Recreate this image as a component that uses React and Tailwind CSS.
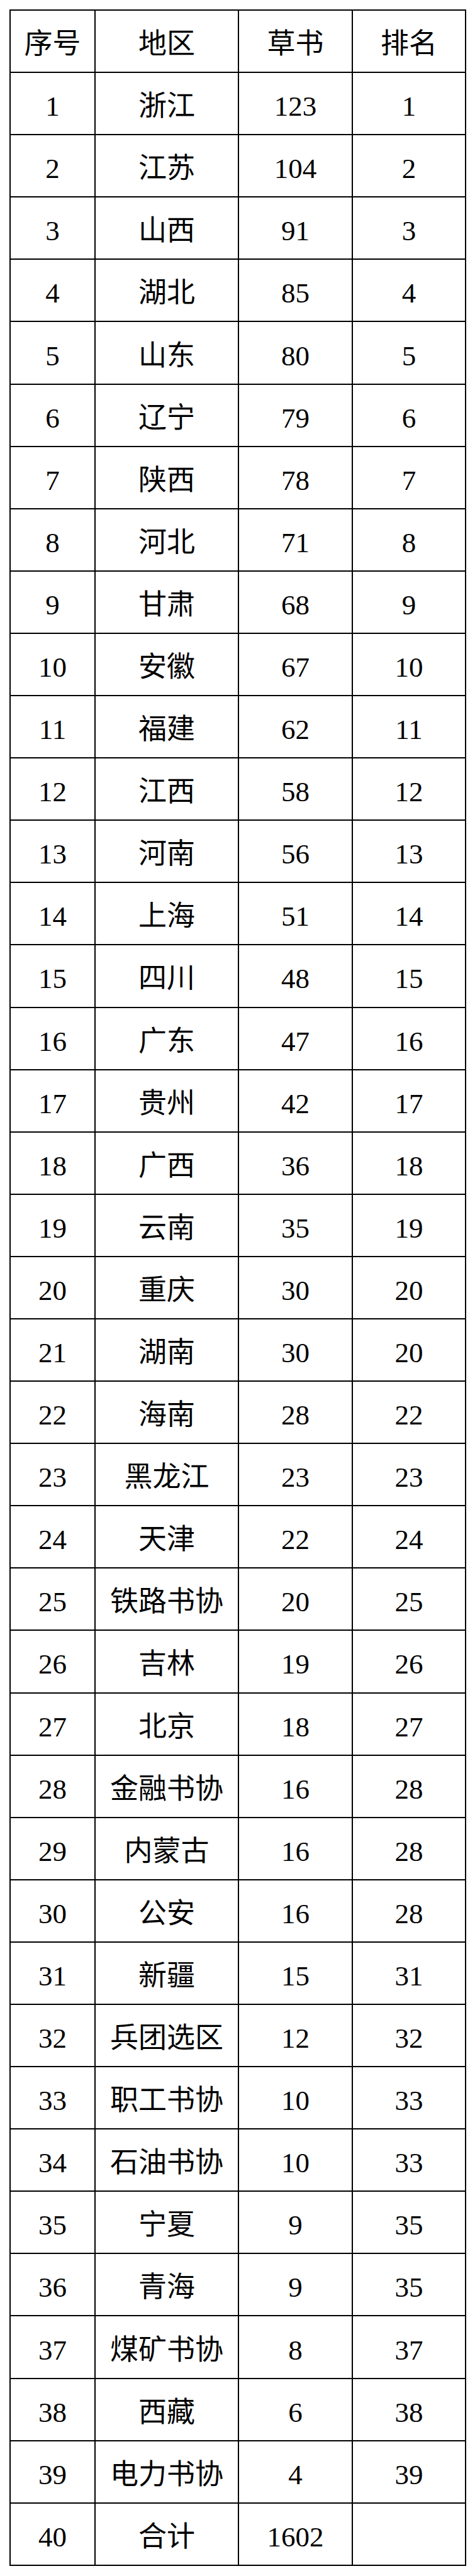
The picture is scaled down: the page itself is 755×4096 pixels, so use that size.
const rows = [
  ["1", "浙江", "123", "1"],
  ["2", "江苏", "104", "2"],
  ["3", "山西", "91", "3"],
  ["4", "湖北", "85", "4"],
  ["5", "山东", "80", "5"],
  ["6", "辽宁", "79", "6"],
  ["7", "陕西", "78", "7"],
  ["8", "河北", "71", "8"],
  ["9", "甘肃", "68", "9"],
  ["10", "安徽", "67", "10"],
  ["11", "福建", "62", "11"],
  ["12", "江西", "58", "12"],
  ["13", "河南", "56", "13"],
  ["14", "上海", "51", "14"],
  ["15", "四川", "48", "15"],
  ["16", "广东", "47", "16"],
  ["17", "贵州", "42", "17"],
  ["18", "广西", "36", "18"],
  ["19", "云南", "35", "19"],
  ["20", "重庆", "30", "20"],
  ["21", "湖南", "30", "20"],
  ["22", "海南", "28", "22"],
  ["23", "黑龙江", "23", "23"],
  ["24", "天津", "22", "24"],
  ["25", "铁路书协", "20", "25"],
  ["26", "吉林", "19", "26"],
  ["27", "北京", "18", "27"],
  ["28", "金融书协", "16", "28"],
  ["29", "内蒙古", "16", "28"],
  ["30", "公安", "16", "28"],
  ["31", "新疆", "15", "31"],
  ["32", "兵团选区", "12", "32"],
  ["33", "职工书协", "10", "33"],
  ["34", "石油书协", "10", "33"],
  ["35", "宁夏", "9", "35"],
  ["36", "青海", "9", "35"],
  ["37", "煤矿书协", "8", "37"],
  ["38", "西藏", "6", "38"],
  ["39", "电力书协", "4", "39"],
  ["40", "合计", "1602", ""],
]

const cell = "border-2 border-black text-center align-middle pt-[10px] p-0"

export default function App() {
  return (
    <div className="w-[755px] bg-white pt-[15px] pl-[15px] pb-[17px] text-black font-['Liberation_Serif','Noto_Sans_CJK_SC',serif]">
      <table className="table-fixed border-collapse w-[724px] text-[45px] leading-none">
        <colgroup>
          <col className="w-[135px]" />
          <col className="w-[228px]" />
          <col className="w-[181px]" />
          <col className="w-[180px]" />
        </colgroup>
        <thead>
          <tr className="h-[99.1px]">
            <th className={cell + " font-normal"}>序号</th>
            <th className={cell + " font-normal"}>地区</th>
            <th className={cell + " font-normal"}>草书</th>
            <th className={cell + " font-normal"}>排名</th>
          </tr>
        </thead>
        <tbody>
          {rows.map((r) => (
            <tr key={r[0]} className="h-[99.1px]">
              {r.map((v, i) => (
                <td key={i} className={cell}>{v}</td>
              ))}
            </tr>
          ))}
        </tbody>
      </table>
    </div>
  )
}
